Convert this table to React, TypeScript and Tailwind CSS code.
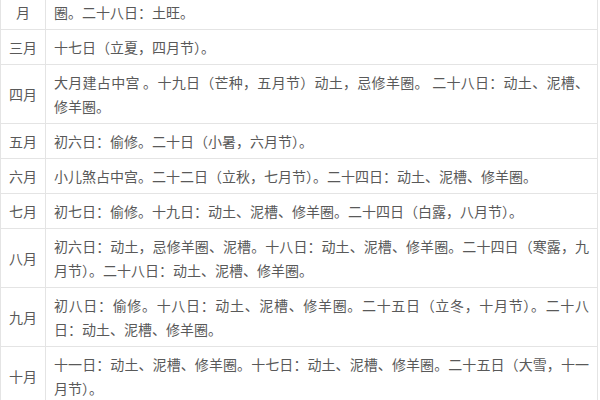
import React from 'react';

type Row = {
    month: string[];
    lines: string[];
};

const rows: Row[] = [
    { month: ['\u00a0', '月'], lines: ['\u00a0', '圈。二十八日：土旺。'] },
    { month: ['三月'], lines: ['十七日（立夏，四月节）。'] },
    { month: ['四月'], lines: ['大月建占中宫 。十九日（芒种，五月节）动土，忌修羊圈。 二十八日：动土、泥槽、', '修羊圈。'] },
    { month: ['五月'], lines: ['初六日：偷修。二十日（小暑，六月节）。'] },
    { month: ['六月'], lines: ['小儿煞占中宫。二十二日（立秋，七月节）。二十四日：动土、泥槽、修羊圈。'] },
    { month: ['七月'], lines: ['初七日：偷修。十九日：动土、泥槽、修羊圈。二十四日（白露，八月节）。'] },
    { month: ['八月'], lines: ['初六日：动土，忌修羊圈、泥槽。十八日：动土、泥槽、修羊圈。二十四日（寒露，九', '月节）。二十八日：动土、泥槽、修羊圈。'] },
    { month: ['九月'], lines: ['初八日：偷修。十八日：动土、泥槽、修羊圈。二十五日（立冬，十月节）。二十八', '日：动土、泥槽、修羊圈。'] },
    { month: ['十月'], lines: ['十一日：动土、泥槽、修羊圈。十七日：动土、泥槽、修羊圈。二十五日（大雪，十一', '月节）。'] },
];

export default function App() {
    return (
        <div
            className="w-[600px] h-[400px] overflow-hidden bg-white text-[#595959] text-[14px] leading-[24px]"
            style={{ fontFamily: '"Noto Sans CJK SC", "Noto Sans", sans-serif' }}
        >
            <table className="w-[598px] -mt-[30px] border-collapse table-fixed">
                <colgroup>
                    <col className="w-[45px]" />
                    <col />
                </colgroup>
                <tbody>
                    {rows.map((row, r) => (
                        <tr key={r}>
                            <td className="border border-[#e4e4e4] px-2 py-[5px] text-center align-middle">
                                {row.month.map((m, i) => (
                                    <span key={i} className="block">
                                        {m}
                                    </span>
                                ))}
                            </td>
                            <td className="border border-[#e4e4e4] px-2 py-[5px] align-middle">
                                {row.lines.map((line, i) => (
                                    <span
                                        key={i}
                                        className={
                                            i < row.lines.length - 1
                                                ? 'block whitespace-nowrap text-justify [text-align-last:justify]'
                                                : 'block whitespace-nowrap'
                                        }
                                    >
                                        {line}
                                    </span>
                                ))}
                            </td>
                        </tr>
                    ))}
                </tbody>
            </table>
        </div>
    );
}
